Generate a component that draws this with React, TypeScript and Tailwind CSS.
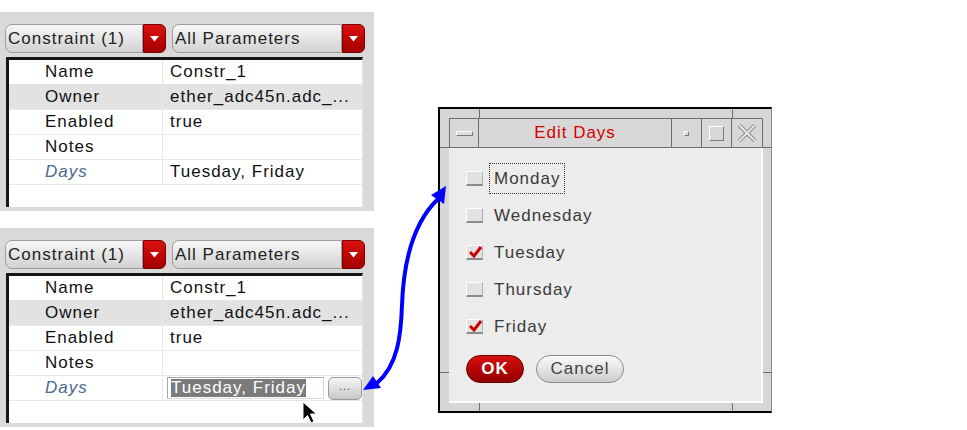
import React from 'react';

const rows = [
  { label: 'Name', value: 'Constr_1' },
  { label: 'Owner', value: 'ether_adc45n.adc_...', shade: true },
  { label: 'Enabled', value: 'true' },
  { label: 'Notes', value: '' },
];

const days = [
  { name: 'Monday', checked: false, focus: true },
  { name: 'Wednesday', checked: false },
  { name: 'Tuesday', checked: true },
  { name: 'Thursday', checked: false },
  { name: 'Friday', checked: true },
];

const Dropdown = ({ text, width }: { text: string; width: string }) => (
  <div className={`flex h-[29px] ${width}`}>
    <div className="flex flex-1 items-center rounded-l-[7px] border border-[#9c9c9c] bg-gradient-to-b from-[#f7f7f7] to-[#d2d2d2] pl-[2px] text-[17px] tracking-[1px] text-[#222]">
      {text}
    </div>
    <div className="flex w-[23px] items-center justify-center rounded-r-[6px] border border-[#7a0000] bg-gradient-to-b from-[#dc1010] to-[#a40000]">
      <svg width="9" height="6" viewBox="0 0 9 6">
        <path d="M0 0 L9 0 L4.5 5.5 Z" fill="#fff" />
      </svg>
    </div>
  </div>
);

const Panel = ({ editing }: { editing?: boolean }) => (
  <div className="flex h-[199px] w-[374px] flex-col bg-[#d9d9d9] pl-[5px] pt-[12px]">
    <div className="flex gap-[6px]">
      <Dropdown text="Constraint (1)" width="w-[161px]" />
      <Dropdown text="All Parameters" width="w-[193px]" />
    </div>
    <div className="ml-[1px] mt-[4px] h-[150px] w-[357px] border-l-[3px] border-t-[3px] border-r border-[#151515] border-r-[#e4e4e4] bg-white">
      {rows.map((r) => (
        <div
          key={r.label}
          className={`flex h-[25px] items-center border-b border-[#e8e8e8] ${r.shade ? 'bg-[#e2e2e2]' : ''}`}
        >
          <div className="flex h-full w-[154px] items-center border-r border-[#e6e6e6] pl-[36px]">{r.label}</div>
          <div className="pl-[7px]">{r.value}</div>
        </div>
      ))}
      <div className="flex h-[25px] items-center border-b border-[#e8e8e8]">
        <div className="flex h-full w-[154px] items-center border-r border-[#e6e6e6] pl-[36px] italic text-[#4a6a8e]">
          Days
        </div>
        {editing ? (
          <div className="flex items-center pl-[4px]">
            <div className="flex h-[22px] w-[157px] items-center border border-[#a8a8a8] border-b-[#dcdcdc] border-r-[#dcdcdc] bg-white pl-[3px]">
              <span className="bg-[#7b7b7b] leading-[18px] text-white">Tuesday, Friday</span>
            </div>
            <div className="ml-[4px] flex h-[23px] w-[34px] items-center justify-center rounded-[5px] border border-[#9a9a9a] bg-gradient-to-b from-[#f6f6f6] to-[#c8c8c8] pb-[4px] text-[11px] tracking-[1px] text-[#444]">
              ...
            </div>
          </div>
        ) : (
          <div className="pl-[7px]">Tuesday, Friday</div>
        )}
      </div>
    </div>
  </div>
);

const Checkbox = ({ checked }: { checked: boolean }) => (
  <div className="relative h-[15px] w-[17px] border-l border-t border-white border-b-2 border-r border-b-[#8a8a8a] border-r-[#b0b0b0] bg-[#e2e2e2]">
    {checked && (
      <svg className="absolute left-[2px] top-[-1px]" width="13" height="13" viewBox="0 0 13 13">
        <path d="M1 7 L5 11 L12 2" stroke="#c80000" strokeWidth="3" fill="none" />
      </svg>
    )}
  </div>
);

const EditDays = () => (
  <div className="relative ml-[62px] mt-[107px] h-[306px] w-[334px] border-2 border-black border-r border-r-[#8a8a8a] bg-[#d6d6d6] pb-[8px] pl-[9px] pr-[8px] pt-[9px]">
    {/* motif resize corner marks */}
    <div className="absolute left-[39px] top-0 h-[9px] w-px bg-[#6e6e6e]" />
    <div className="absolute left-[292px] top-0 h-[9px] w-px bg-[#6e6e6e]" />
    <div className="absolute bottom-0 left-[39px] h-[8px] w-px bg-[#6e6e6e]" />
    <div className="absolute bottom-0 left-[292px] h-[8px] w-px bg-[#6e6e6e]" />
    <div className="absolute left-0 top-[38px] h-px w-[9px] bg-[#6e6e6e]" />
    <div className="absolute right-0 top-[38px] h-px w-[8px] bg-[#6e6e6e]" />
    <div className="absolute left-0 top-[263px] h-px w-[9px] bg-[#6e6e6e]" />
    <div className="absolute right-0 top-[263px] h-px w-[8px] bg-[#6e6e6e]" />

    <div className="flex h-[30px] border border-[#6e6e6e] bg-[#d8d8d8]">
      <div className="flex w-[29px] items-center justify-center border-r border-[#6e6e6e]">
        <div className="h-[5px] w-[17px] border-l border-t border-white border-b border-r border-b-[#7a7a7a] border-r-[#7a7a7a] bg-[#dedede]" />
      </div>
      <div className="flex flex-1 items-center justify-center border-r border-[#6e6e6e] text-[17px] tracking-[1px] text-[#d40000]">
        Edit Days
      </div>
      <div className="flex w-[30px] items-center justify-center border-r border-[#6e6e6e]">
        <div className="h-[5px] w-[5px] border-l border-t border-white border-b border-r border-b-[#7a7a7a] border-r-[#7a7a7a]" />
      </div>
      <div className="flex w-[30px] items-center justify-center border-r border-[#6e6e6e]">
        <div className="h-[15px] w-[15px] border-l border-t border-white border-b border-r border-b-[#7a7a7a] border-r-[#7a7a7a]" />
      </div>
      <div className="flex w-[30px] items-center justify-center">
        <svg width="20" height="18" viewBox="0 0 20 18">
          <path d="M2 1 L18 17 M18 1 L2 17" stroke="#8a8a8a" strokeWidth="4" />
          <path d="M2 1 L18 17 M18 1 L2 17" stroke="#e8e8e8" strokeWidth="2" />
        </svg>
      </div>
    </div>

    <div className="h-[255px] border-b-2 border-r-2 border-white bg-[#ececec] pl-[17px] pt-[12px] text-[#3a3a3a]">
      {days.map((d) => (
        <div key={d.name} className="flex h-[37px] items-center gap-[6px]">
          <Checkbox checked={d.checked} />
          <span
            className={`border px-[4px] py-[2px] ${d.focus ? 'border-dotted border-[#333]' : 'border-transparent'}`}
          >
            {d.name}
          </span>
        </div>
      ))}
      <div className="mt-[10px] flex gap-[12px]">
        <div className="flex h-[28px] w-[58px] items-center justify-center rounded-full border border-[#6a0000] bg-gradient-to-b from-[#d81010] to-[#920000] font-bold text-white">
          OK
        </div>
        <div className="flex h-[28px] w-[88px] items-center justify-center rounded-full border border-[#8c8c8c] bg-gradient-to-b from-[#fbfbfb] to-[#cdcdcd] text-[#444]">
          Cancel
        </div>
      </div>
    </div>
  </div>
);

export default function App() {
  return (
    <div className="relative flex h-[430px] w-[967px] overflow-hidden bg-white font-['Liberation_Sans',Arial,sans-serif] text-[17px] tracking-[1px] text-[#111]">
      <div className="flex w-[376px] flex-col gap-[17px] pt-[12px]">
        <Panel />
        <Panel editing />
      </div>
      <EditDays />

      {/* link arrow + mouse pointer */}
      <svg className="pointer-events-none absolute left-0 top-0" width="967" height="430" viewBox="0 0 967 430">
        <path
          d="M377 383 C398 365, 401 335, 402 305 C404 250, 418 218, 438 199"
          stroke="#0000ff"
          strokeWidth="4"
          fill="none"
        />
        <path d="M363 390 L373 376 L381 388 Z" fill="#0000ff" />
        <path d="M446 186 L431 195 L444 204 Z" fill="#0000ff" />
        <path
          d="M303 402 L303 420 L307.5 415.5 L311 423 L314 421.5 L310.5 414 L316.5 414 Z"
          fill="#000"
          stroke="#fff"
          strokeWidth="1"
        />
      </svg>
    </div>
  );
}
